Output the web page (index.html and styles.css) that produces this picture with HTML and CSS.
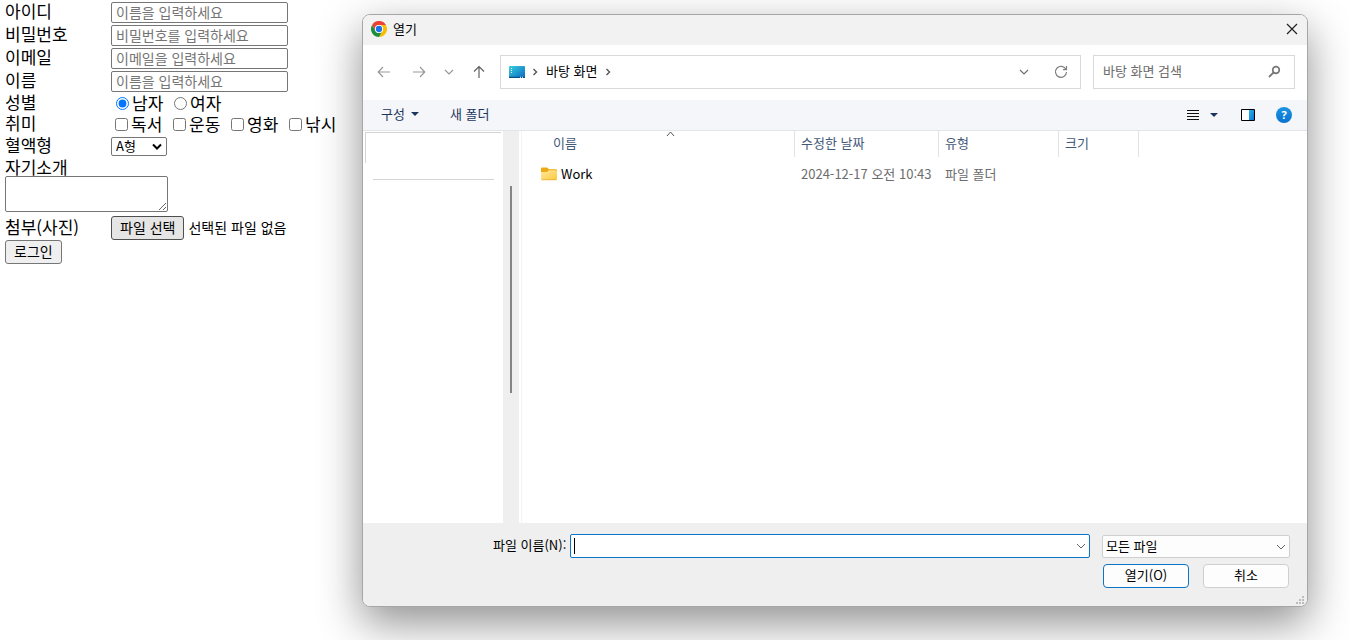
FILE: index.html
```html
<!DOCTYPE html>
<html lang="ko">
<head>
<meta charset="utf-8">
<title>회원가입</title>
<link rel="stylesheet" href="styles.css">
</head>
<body>
<form class="signup">
  <div class="row"><label class="name" for="uid">아이디</label><input class="text" id="uid" type="text" placeholder="이름을 입력하세요"></div>
  <div class="row"><label class="name" for="pw">비밀번호</label><input class="text" id="pw" type="password" placeholder="비밀번호를 입력하세요"></div>
  <div class="row"><label class="name" for="mail">이메일</label><input class="text" id="mail" type="email" placeholder="이메일을 입력하세요"></div>
  <div class="row"><label class="name" for="uname">이름</label><input class="text" id="uname" type="text" placeholder="이름을 입력하세요"></div>
  <div class="row short"><span class="name">성별</span>
    <label class="option"><input type="radio" name="gender" checked><span>남자</span></label>
    <label class="option"><input type="radio" name="gender"><span>여자</span></label>
  </div>
  <div class="row short"><span class="name">취미</span>
    <label class="option"><input type="checkbox"><span>독서</span></label>
    <label class="option"><input type="checkbox"><span>운동</span></label>
    <label class="option"><input type="checkbox"><span>영화</span></label>
    <label class="option"><input type="checkbox"><span>낚시</span></label>
  </div>
  <div class="row"><label class="name" for="blood">혈액형</label>
    <div class="blood"><select id="blood"><option>A형</option><option>B형</option><option>O형</option><option>AB형</option></select><svg width="10" height="8" viewBox="0 0 10 8"><path d="M1 1.500l4 4l4-4" stroke="#000" stroke-width="2"/></svg></div>
  </div>
  <div class="intro"><label for="intro">자기소개</label><textarea id="intro"></textarea></div>
  <div class="row file"><label class="name" for="photo">첨부(사진)</label>
    <input id="photo" type="file" hidden>
    <button class="btn pick" type="button">파일 선택</button><span class="nofile">선택된 파일 없음</span>
  </div>
  <button class="btn" type="button">로그인</button>
</form>

<section class="dialog" role="dialog" aria-label="열기">
  <header class="titlebar">
    <svg width="16" height="16" viewBox="0 0 48 48"><circle cx="24" cy="24" r="24" fill="#fff"/><path d="M3.2 12A24 24 0 0 1 44.8 12H24A12 12 0 0 0 13.6 30Z" fill="#ea4335"/><path d="M44.8 12A24 24 0 0 1 24 48L34.4 30A12 12 0 0 0 24 12Z" fill="#fbbc04"/><path d="M24 48A24 24 0 0 1 3.2 12L13.6 30A12 12 0 0 0 34.4 30Z" fill="#1e8e3e"/><circle cx="24" cy="24" r="12" fill="#fff"/><circle cx="24" cy="24" r="9.5" fill="#1a73e8"/></svg>
    <span class="title">열기</span>
    <button class="icon close" type="button" aria-label="닫기"><svg width="12" height="12" viewBox="0 0 12 12"><path d="M1 1l10 10M11 1L1 11" stroke="#222" stroke-width="1.2"/></svg></button>
  </header>

  <nav class="navbar">
    <div class="arrows">
      <button class="icon back" type="button" aria-label="뒤로"><svg width="14" height="14" viewBox="0 0 14 14"><path d="M13 7H1.5M6 2L1.2 7L6 12" stroke="#999" stroke-width="1.2"/></svg></button>
      <button class="icon" type="button" aria-label="앞으로"><svg width="14" height="14" viewBox="0 0 14 14"><path d="M1 7h11.5M8 2l4.8 5L8 12" stroke="#999" stroke-width="1.2"/></svg></button>
      <button class="icon" type="button" aria-label="최근 위치"><svg width="10" height="10" viewBox="0 0 10 10"><path d="M1 3l4 4l4-4" stroke="#999" stroke-width="1.2"/></svg></button>
      <button class="icon" type="button" aria-label="위로"><svg width="14" height="14" viewBox="0 0 14 14"><path d="M7 13V1.5M2 6.5l5-5l5 5" stroke="#606060" stroke-width="1.2"/></svg></button>
    </div>
    <div class="address">
      <svg width="16" height="12" viewBox="0 0 16 12"><defs><linearGradient id="desk" x1="0" y1="0" x2="1" y2="1"><stop offset="0" stop-color="#37d0dc"/><stop offset="1" stop-color="#0b68c4"/></linearGradient></defs><rect width="16" height="12" rx="1" fill="url(#desk)"/><path d="M0 10.7h16v.8q0 .5-.5.5H.5Q0 12 0 11.500Z" fill="#0b4f86"/><path d="M2 2h1v1H2zM2 4h1v1H2zM2 6h1v1H2zM11 10.700h1v1h-1zM13 10.700h1v1h-1z" fill="#fff"/></svg>
      <svg width="6" height="8" viewBox="0 0 6 8"><path d="M1.500 1l3 3l-3 3" stroke="#555" stroke-width="1.400"/></svg>
      <span>바탕 화면</span>
      <svg width="6" height="8" viewBox="0 0 6 8"><path d="M1.500 1l3 3l-3 3" stroke="#555" stroke-width="1.400"/></svg>
      <button class="icon down" type="button" aria-label="목록"><svg width="10" height="10" viewBox="0 0 10 10"><path d="M1 3l4 4l4-4" stroke="#707070" stroke-width="1.200"/></svg></button>
      <button class="icon" type="button" aria-label="새로 고침"><svg width="14" height="14" viewBox="0 0 14 14"><path d="M12 4.500A5.500 5.500 0 1 0 12.500 7M12.500 1v3.600H9" stroke="#808080" stroke-width="1.200"/></svg></button>
    </div>
    <div class="search">
      <input type="search" aria-label="검색" placeholder="바탕 화면 검색">
      <svg width="13" height="13" viewBox="0 0 13 13"><circle cx="8" cy="5" r="3.300" stroke="#777" stroke-width="1.700"/><path d="M5.500 7.500L1 12" stroke="#777" stroke-width="1.800"/></svg>
    </div>
  </nav>

  <div class="toolbar">
    <button class="tool" type="button">구성<svg width="8" height="4" viewBox="0 0 8 4"><path d="M0 0h8L4 4z" fill="#1d355e"/></svg></button>
    <button class="tool" type="button">새 폴더</button>
    <div class="views">
      <button class="icon" type="button" aria-label="보기"><svg width="12" height="12" viewBox="0 0 12 12"><path d="M0 1.500h12M0 4.500h12M0 7.500h12M0 10.500h12" stroke="#111"/></svg></button>
      <button class="icon more" type="button" aria-label="보기 옵션"><svg width="8" height="4" viewBox="0 0 8 4"><path d="M0 0h8L4 4z" fill="#1d355e"/></svg></button>
      <button class="icon pane" type="button" aria-label="미리 보기"><svg width="14" height="12" viewBox="0 0 14 12"><defs><linearGradient id="pv" x1="0" y1="0" x2="1" y2="1"><stop offset="0" stop-color="#29b2ed"/><stop offset="1" stop-color="#0b76d2"/></linearGradient></defs><path d="M.5.5h13v11H.5z" fill="#fff"/><path d="M8 1h5v10H8z" fill="url(#pv)"/><path d="M.5.5h13v11H.5z" stroke="#000"/></svg></button>
      <button class="help" type="button" aria-label="도움말">?</button>
    </div>
  </div>

  <div class="content">
    <aside class="tree"><div class="pinned"></div><hr></aside>
    <div class="scroll"><div class="thumb"></div></div>
    <div class="files">
      <table>
        <colgroup><col class="c-name"><col class="c-date"><col class="c-type"><col class="c-size"><col></colgroup>
        <thead><tr><th>이름<svg class="sort" width="9" height="6" viewBox="0 0 9 6"><path d="M1 5l3.500-4L8 5" stroke="#555"/></svg></th><th>수정한 날짜</th><th>유형</th><th>크기</th><td></td></tr></thead>
        <tbody><tr><td><span class="folder"><svg width="16" height="14" viewBox="0 0 16 14"><defs><linearGradient id="fold" x1="0" y1="0" x2="1" y2="1"><stop offset="0" stop-color="#ffe9a3"/><stop offset="1" stop-color="#fdc93b"/></linearGradient></defs><path d="M0 1.500Q0 .5 1 .5h5l2 1.800h7q1 0 1 1V8H0z" fill="#eda912"/><path d="M0 5h6l2-1.800h7q1 0 1 1V12q0 1-1 1H1q-1 0-1-1z" fill="url(#fold)"/><path d="M.5 12.800h15" stroke="#e7a62b" stroke-width=".7"/></svg>Work</span></td><td>2024-12-17 오전 10:43</td><td>파일 폴더</td><td></td><td></td></tr></tbody>
      </table>
    </div>
  </div>

  <footer class="footer">
    <div class="line">
      <label for="fname">파일 이름(N):</label>
      <div class="combo"><span class="caret"></span><input id="fname" type="text"><svg width="10" height="10" viewBox="0 0 10 10"><path d="M1 3l4 4l4-4" stroke="#666"/></svg></div>
      <div class="filter"><select aria-label="파일 형식"><option>모든 파일</option></select><svg width="10" height="10" viewBox="0 0 10 10"><path d="M1 3l4 4l4-4" stroke="#666"/></svg></div>
    </div>
    <div class="actions"><button class="action primary" type="button">열기(O)</button><button class="action" type="button">취소</button></div>
    <svg class="grip" width="8" height="8" viewBox="0 0 8 8"><path d="M6 0h2v2H6zM3 3h2v2H3zM6 3h2v2H6zM0 6h2v2H0zM3 6h2v2H3zM6 6h2v2H6z" fill="#bdbdbd"/></svg>
  </footer>
</section>
</body>
</html>
```

FILE: styles.css
```css
* { box-sizing: border-box; }
body {
  margin: 0;
  min-height: 100vh;
  position: relative;
  overflow: hidden;
  background: #fff;
  color: #000;
  font: 17px/18px "Noto Sans CJK KR", "Noto Sans", sans-serif;
}
svg { fill: none; flex: none; }
button, input, select, textarea { font-family: inherit; }

/* Sign-up form */
.signup { padding: 1px 5px; }
.row { display: flex; align-items: center; height: 23px; }
.row.short { height: 21px; }
.name { width: 106px; flex: none; padding-bottom: 3px; }
.text {
  width: 177px;
  height: 21px;
  padding: 0 4px 2px;
  border: 1px solid #767676;
  border-radius: 2px;
  font-size: 14px;
}
.text::placeholder { color: #757575; }
.option { display: flex; align-items: center; gap: 3px; width: 58px; white-space: nowrap; }
.option span { padding-bottom: 2px; }
.option input { width: 13px; height: 13px; margin: 0 0 0 4px; flex: none; }
.option input[type="radio"] { margin-left: 5px; }
.blood { position: relative; width: 56px; }
.blood select {
  display: block;
  width: 100%;
  height: 19px;
  padding: 0 4px 1px;
  appearance: none;
  border: 1px solid #767676;
  border-radius: 2px;
  background: #fff;
  color: #000;
  font-size: 13px;
  line-height: 16px;
}
.blood svg { position: absolute; top: 6px; right: 5px; }
.intro { display: flex; flex-direction: column; align-items: flex-start; }
.intro textarea {
  width: 163px;
  height: 36px;
  border: 1px solid #767676;
  border-radius: 2px;
}
.row.file { height: 24px; margin-top: 4px; }
.btn {
  height: 24px;
  padding: 0 8px 2px;
  border: 1px solid #767676;
  border-radius: 3px;
  background: #efefef;
  color: #000;
  font-size: 14px;
  line-height: 20px;
}
.btn.pick { border-color: #4f4f4f; background: #e5e5e5; }
.nofile { margin-left: 4px; padding-bottom: 2px; font-size: 14px; }

/* File dialog window */
.dialog {
  position: absolute;
  top: 14px;
  right: 41px;
  bottom: 33px;
  left: 362px;
  display: flex;
  flex-direction: column;
  overflow: hidden;
  border: 1px solid #a6a6a6;
  border-radius: 8px;
  background: #fff;
  box-shadow: 0 16px 44px rgba(0, 0, 0, .44);
  font-size: 13px;
  line-height: 18px;
}
.icon {
  display: flex;
  align-items: center;
  justify-content: center;
  width: 16px;
  height: 16px;
  padding: 0;
  border: 0;
  background: none;
}
.titlebar {
  display: flex;
  align-items: center;
  gap: 6px;
  height: 30px;
  padding: 0 7px 2px 8px;
  background: #f2f2f2;
}
.close { margin-left: auto; }

.navbar { display: flex; align-items: center; height: 55px; padding: 0 12px 2px 0; }
.arrows { display: flex; align-items: center; gap: 14px; width: 137px; padding-left: 13px; }
.back { margin-right: 5px; }
.address {
  display: flex;
  flex: 1;
  align-items: center;
  gap: 7px;
  height: 34px;
  padding: 0 11px 0 8px;
  border: 1px solid #d9d9d9;
}
.address span { margin: 0 1px 2px; }
.down { margin: 0 14px 0 auto; }
.search {
  display: flex;
  align-items: center;
  width: 202px;
  height: 34px;
  margin-left: 12px;
  padding: 0 13px 0 9px;
  border: 1px solid #d9d9d9;
}
.search input { flex: 1; min-width: 0; padding: 0 0 2px; border: 0; font-size: 13px; }
.search input::placeholder { color: #6b6b6b; }

.toolbar {
  display: flex;
  align-items: center;
  gap: 31px;
  height: 31px;
  padding: 0 15px 0 18px;
  border-bottom: 1px solid #e3e5e7;
  background: #f4f6f9;
}
.tool {
  display: flex;
  align-items: center;
  gap: 6px;
  padding: 0 0 2px;
  border: 0;
  background: none;
  color: #1d355e;
  font-size: 13px;
  line-height: 18px;
}
.views { display: flex; align-items: center; margin-left: auto; }
.more { margin-left: 5px; }
.pane { margin: 0 20px 0 18px; }
.help {
  width: 16px;
  height: 16px;
  padding: 0;
  border: 0;
  border-radius: 50%;
  background: linear-gradient(#1c95e2, #0873cf);
  color: #fff;
  font: bold 11px/16px "Noto Sans", sans-serif;
}

.content { display: flex; flex: 1; min-height: 0; }
.tree { width: 140px; padding: 1px 0 0 2px; }
.pinned { width: 136px; height: 31px; border: solid #d4d4d4; border-width: 1px 0 0 1px; }
.tree hr { height: 1px; margin: 16px 9px 0 8px; border: 0; background: #d4d4d4; }
.scroll { width: 16px; padding: 55px 7px 0; background: #efefef; }
.thumb { width: 2px; height: 207px; background: #858585; }
.files { flex: 1; margin-left: 2px; border-left: 1px solid #f3f3f3; }
.files table { width: 100%; table-layout: fixed; border-collapse: separate; border-spacing: 0; }
.c-name { width: 273px; }
.c-date { width: 144px; }
.c-type { width: 120px; }
.c-size { width: 80px; }
.files th {
  position: relative;
  height: 26px;
  padding: 0 0 2px 6px;
  border-right: 1px solid #e2e2e2;
  color: #44597a;
  font-weight: 400;
  text-align: left;
}
.files th:first-child { padding-left: 31px; }
.sort { position: absolute; top: 0; left: 144px; }
.files tbody td { height: 34px; padding: 0 0 0 6px; color: #6d6d6d; white-space: nowrap; }
.files tbody td:first-child { padding-left: 19px; color: #000; }
.folder { display: flex; align-items: center; gap: 4px; }

.footer { position: relative; height: 83px; padding: 11px 17px 0 0; background: #efefef; }
.line { display: flex; align-items: center; padding-left: 130px; }
.line label { padding-bottom: 2px; }
.combo {
  display: flex;
  flex: 1;
  align-items: center;
  height: 24px;
  margin: 0 12px 0 4px;
  padding: 0 3px;
  border: 1px solid #0b76c8;
  border-radius: 2px;
  background: #fff;
}
.caret { width: 1px; height: 16px; background: #000; }
.combo input { flex: 1; min-width: 0; border: 0; outline: 0; background: none; }
.filter { position: relative; width: 188px; }
.filter select {
  display: block;
  width: 100%;
  height: 23px;
  padding: 0 4px 2px 3px;
  appearance: none;
  border: 1px solid #cfcfcf;
  border-radius: 2px;
  background: #fdfdfd;
  color: #000;
  font-size: 13px;
}
.filter svg { position: absolute; top: 7px; right: 4px; }
.actions { display: flex; justify-content: flex-end; gap: 14px; margin: 6px 1px 0 0; }
.action {
  width: 86px;
  height: 24px;
  padding: 0 0 2px;
  border: 1px solid #cfcfcf;
  border-radius: 4px;
  background: #fdfdfd;
  color: #000;
  font-size: 13px;
  line-height: 18px;
}
.primary { border-color: #0b76c8; }
.grip { position: absolute; right: 3px; bottom: 2px; }
```
